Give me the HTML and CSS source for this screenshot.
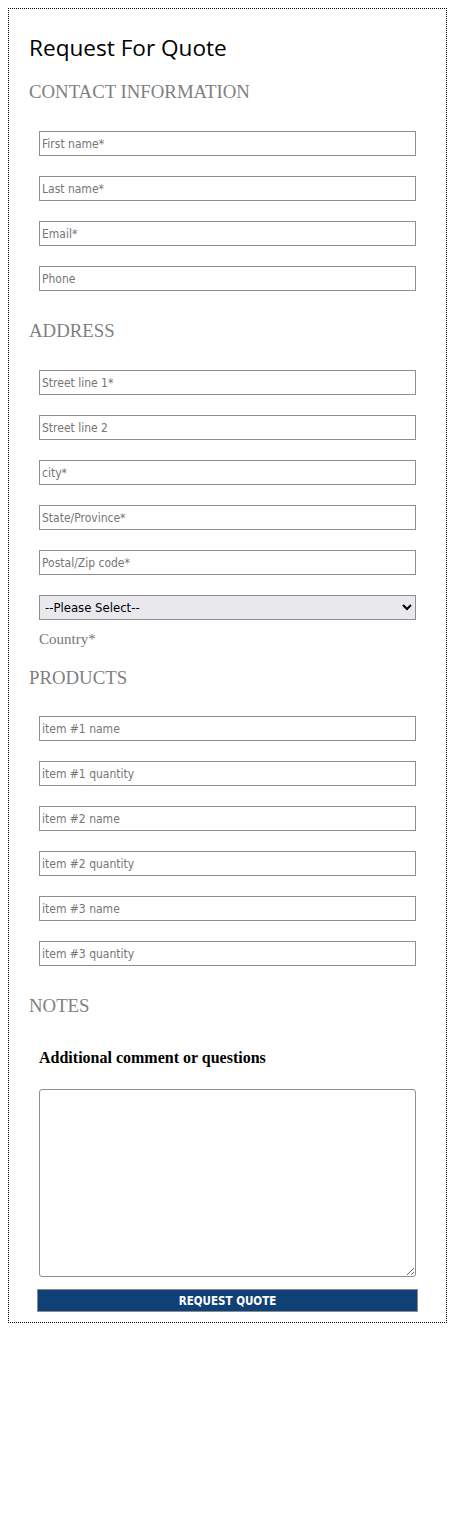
FILE: index.html
```html
<!DOCTYPE html>
<html>
<head>
<meta charset="utf-8">
<link rel="stylesheet" href="styles.css">
</head>
<body>
<form class="quote-form">
  <h1 class="title">Request For Quote</h1>

  <h2 class="section contact-head">CONTACT INFORMATION</h2>
  <div class="fields">
    <input class="field" type="text" placeholder="First name*">
    <input class="field" type="text" placeholder="Last name*">
    <input class="field" type="text" placeholder="Email*">
    <input class="field" type="text" placeholder="Phone">
  </div>

  <h2 class="section">ADDRESS</h2>
  <div class="fields">
    <input class="field" type="text" placeholder="Street line 1*">
    <input class="field" type="text" placeholder="Street line 2">
    <input class="field" type="text" placeholder="city*">
    <input class="field" type="text" placeholder="State/Province*">
    <input class="field" type="text" placeholder="Postal/Zip code*">
    <select class="field select">
      <option>--Please Select--</option>
    </select>
  </div>
  <div class="country-label">Country*</div>

  <h2 class="section products-head">PRODUCTS</h2>
  <div class="fields products-fields">
    <input class="field" type="text" placeholder="item #1 name">
    <input class="field" type="text" placeholder="item #1 quantity">
    <input class="field" type="text" placeholder="item #2 name">
    <input class="field" type="text" placeholder="item #2 quantity">
    <input class="field" type="text" placeholder="item #3 name">
    <input class="field" type="text" placeholder="item #3 quantity">
  </div>

  <h2 class="section">NOTES</h2>
  <div class="comment-label">Additional comment or questions</div>
  <textarea class="comments"></textarea>
  <button class="submit" type="button">REQUEST QUOTE</button>
</form>
</body>
</html>
```

FILE: styles.css
```css
html, body {
  margin: 0;
  padding: 0;
  background: #fff;
}
body {
  padding: 8px;
}
.quote-form {
  width: 439px;
  box-sizing: border-box;
  border: 1px dotted #000;
  padding: 24px 0 10px 20px;
  display: flex;
  flex-direction: column;
  align-items: flex-start;
}
.title {
  margin: 0;
  font-family: "Open Sans", "Noto Sans", sans-serif;
  font-weight: 400;
  font-size: 22.6px;
  line-height: 29px;
  color: #000;
}
.section {
  margin: 28px 0 0 0;
  font-family: "Liberation Serif", serif;
  font-weight: 400;
  font-size: 18.8px;
  line-height: 24px;
  color: #808080;
}
.contact-head {
  margin-top: 18px;
}
.products-head {
  margin-top: 18px;
}
.fields {
  margin: 27px 0 0 10px;
  display: flex;
  flex-direction: column;
  gap: 20px;
}
.products-fields {
  margin-top: 26px;
}
.field {
  width: 377px;
  height: 25px;
  box-sizing: border-box;
  margin: 0;
  border: 1px solid #8f8f8f;
  border-radius: 0;
  padding: 0 2px;
  font-family: "DejaVu Sans Condensed", "DejaVu Sans", sans-serif;
  font-size: 12px;
  color: #000;
  background: #fff;
  outline: none;
}
.field::placeholder {
  color: #767676;
}
.select {
  background: #e9e9ed;
  font-family: "DejaVu Sans Condensed", "DejaVu Sans", sans-serif;
  font-size: 13px;
  color: #000;
  padding: 0 1px;
}
.country-label {
  margin: 10px 0 0 10px;
  font-family: "Liberation Serif", serif;
  font-size: 15px;
  line-height: 18px;
  color: #777;
}
.comment-label {
  margin: 30px 0 0 10px;
  font-family: "Liberation Serif", serif;
  font-weight: 700;
  font-size: 16px;
  line-height: 20px;
  color: #000;
}
.comments {
  margin: 21px 0 0 10px;
  width: 377px;
  height: 188px;
  box-sizing: border-box;
  border: 1px solid #8f8f8f;
  border-radius: 3px;
  resize: vertical;
  outline: none;
}
.submit {
  margin: 12px 0 0 8px;
  width: 381px;
  height: 23px;
  box-sizing: border-box;
  border: 1px solid #8a8a8a;
  background: #0f4177;
  color: #fff;
  font-family: "DejaVu Sans Condensed", "DejaVu Sans", sans-serif;
  font-weight: 700;
  font-size: 11.5px;
  padding: 0;
  cursor: pointer;
}
```
